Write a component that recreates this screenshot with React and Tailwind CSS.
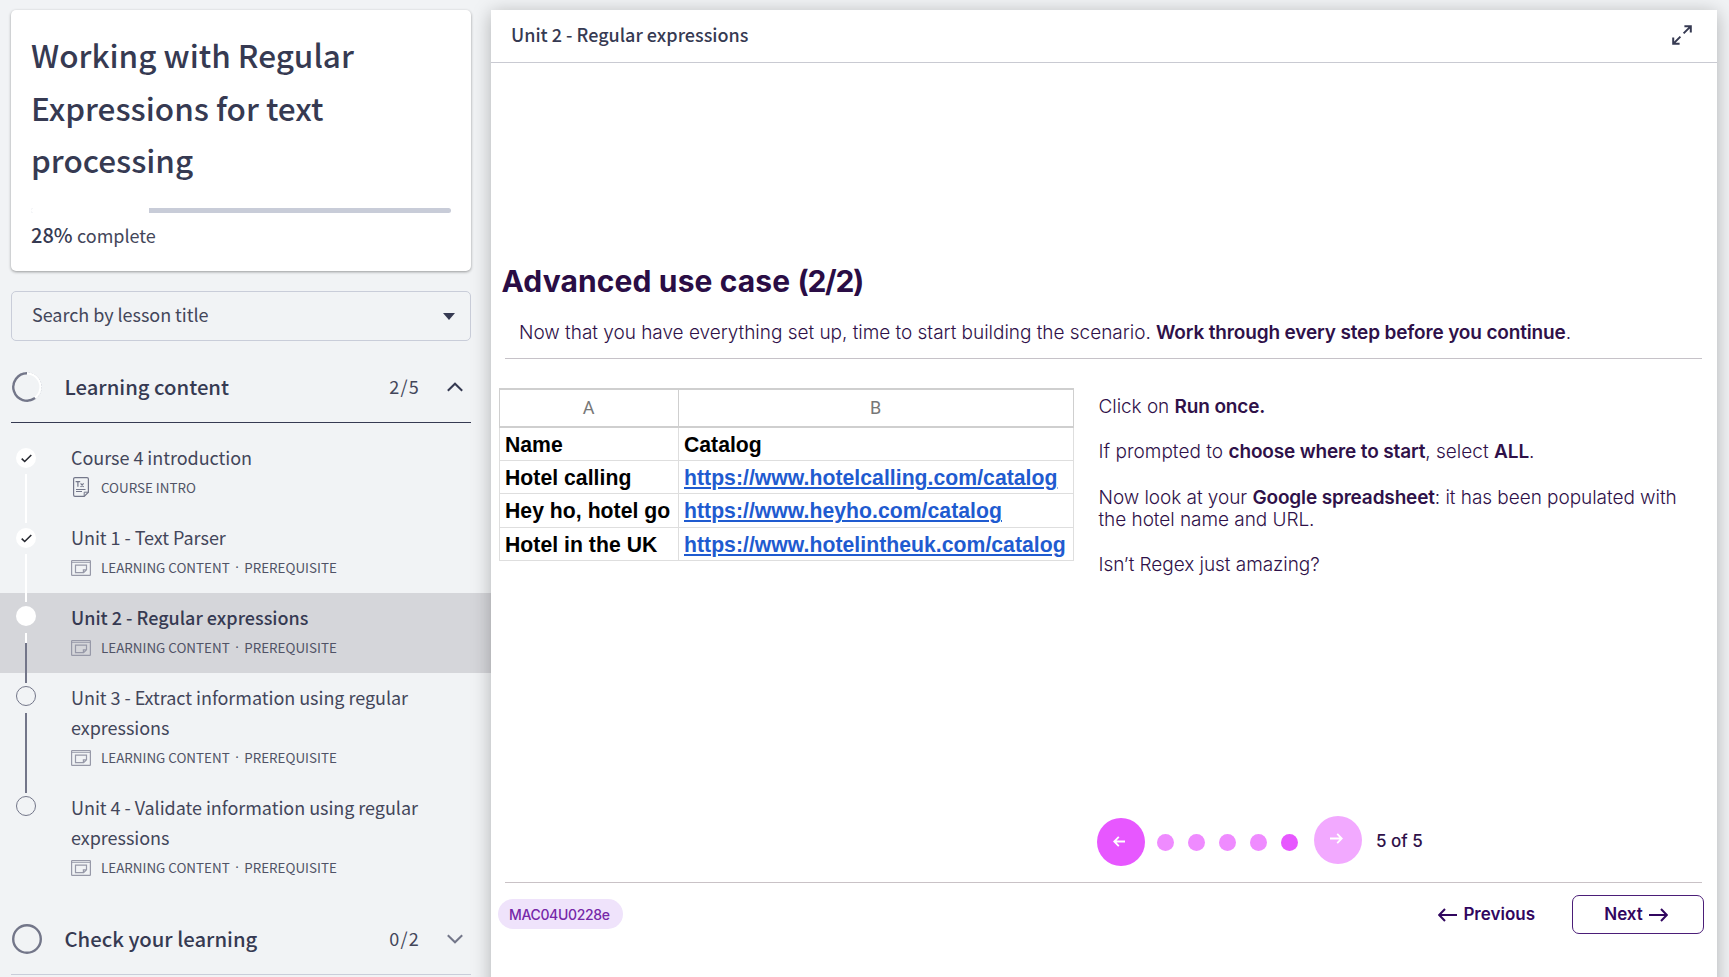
const TRACK_WHITE = "bg-white";
const TRACK_GRAY = "bg-[#737689]";

const lessons = [
  { title: "Course 4 introduction", kind: "COURSE INTRO", icon: "text", status: "done", line: "top-[41px] h-[49px]", tone: TRACK_WHITE },
  { title: "Unit 1 - Text Parser", kind: "LEARNING CONTENT", tag: "PREREQUISITE", icon: "window", status: "done", line: "top-[41px] h-[48px]", tone: TRACK_WHITE },
  { title: "Unit 2 - Regular expressions", kind: "LEARNING CONTENT", tag: "PREREQUISITE", icon: "window", status: "current", line: "top-[40px] h-[50px]", tone: TRACK_GRAY },
  { title: "Unit 3 - Extract information using regular expressions", kind: "LEARNING CONTENT", tag: "PREREQUISITE", icon: "window", status: "todo", line: "top-[40px] h-[80px]", tone: TRACK_GRAY },
  { title: "Unit 4 - Validate information using regular expressions", kind: "LEARNING CONTENT", tag: "PREREQUISITE", icon: "window", status: "todo" },
];

const hotels = [
  ["Hotel calling", "https://www.hotelcalling.com/catalog"],
  ["Hey ho, hotel go", "https://www.heyho.com/catalog"],
  ["Hotel in the UK", "https://www.hotelintheuk.com/catalog"],
];

function TextIcon() {
  return (
    <svg className="ml-[2px] h-5 w-4" viewBox="0 0 16 20" fill="none" stroke="#74778a" strokeWidth="1.2">
      <path d="M2 .6h12a1.4 1.4 0 0 1 1.4 1.4v13.2l-4.2 4.2H2A1.4 1.4 0 0 1 .6 18V2A1.4 1.4 0 0 1 2 .6Z" />
      <path d="M11.2 19.4v-4.2h4.2M3 12.5h9.5M3 14.5h6" strokeWidth="1" />
      <path d="M2.6 4.6h4.6M4.9 4.6v5.2M7.6 6.4l3 3.4M10.6 6.4 7.6 9.8" strokeWidth="1.2" />
    </svg>
  );
}

function WindowIcon() {
  return (
    <svg className="mt-[1px] h-4 w-5" viewBox="0 0 20 16" fill="none" stroke="#9799a8" strokeWidth="1.2">
      <rect x=".6" y=".6" width="18.8" height="14.8" rx=".6" />
      <path d="M.6 2.5h18.8" strokeWidth=".8" />
      <path d="M4.5 5.1h11v4.7l-2.9 2.9H4.5ZM12.4 12.7V9.8h3.1" />
    </svg>
  );
}

function Marker({ status }) {
  if (status === "done") {
    return (
      <span className="mt-[15px] flex h-5 w-5 items-center justify-center rounded-full bg-white">
        <svg className="h-[9px] w-[11px]" viewBox="0 0 11 9" fill="none" stroke="#25272f" strokeWidth="1.6">
          <path d="M.7 4.6 3.7 7.5 10.3 1" />
        </svg>
      </span>
    );
  }
  if (status === "current") return <span className="mt-[13px] h-5 w-5 rounded-full bg-white" />;
  return <span className="mt-[13px] h-5 w-5 rounded-full border border-[#737689]" />;
}

function Lesson({ item }) {
  const current = item.status === "current";
  return (
    <li className={current ? "relative flex bg-[#d5d6da] pl-4" : "relative flex pl-4"}>
      {item.line && (
        <span className={`absolute left-[25px] z-10 flex w-[2px] flex-col ${item.line} ${item.tone}`}>
          {current && <span className="h-[10px] bg-white" />}
        </span>
      )}
      <Marker status={item.status} />
      <div className="ml-[35px] w-[370px] pt-[9px] pb-[11px]">
        <div className={current ? "text-[18px] leading-[30px] font-medium" : "text-[18px] leading-[30px] tracking-[-0.04px] text-[#43465a]"}>{item.title}</div>
        <div className="flex h-[30px] items-center text-[13.4px] text-[#505366]">
          <span className="flex w-[30px]">{item.icon === "text" ? <TextIcon /> : <WindowIcon />}</span>
          <span>{item.kind}</span>
          {item.tag && (
            <>
              <span className="w-[14.6px] text-center font-['Noto_Sans']">·</span>
              <span>{item.tag}</span>
            </>
          )}
        </div>
      </div>
    </li>
  );
}

function SectionHeader({ title, count, open }) {
  return (
    <div className={`mr-5 ml-[11px] flex h-[72px] items-center border-b ${open ? "border-[#363a52]" : "border-[#c9cdd9]"}`}>
      <svg className="ml-[1px] h-[30px] w-[30px]" viewBox="0 0 30 30" fill="none">
        {open ? (
          <>
            <circle cx="15" cy="15" r="14.4" stroke="#c4c6d0" strokeWidth=".9" strokeDasharray="1.5 1.5" />
            <circle cx="15" cy="15" r="13.4" stroke="#fff" strokeWidth="2" />
            <path d="M15 1.3A13.7 13.7 0 1 0 23.05 26.08" stroke="#737689" strokeWidth="2.4" />
          </>
        ) : (
          <circle cx="15" cy="15" r="13.8" stroke="#737689" strokeWidth="2.4" />
        )}
      </svg>
      <h2 className="ml-[22.5px] flex-1 pb-[2px] text-[20.3px] leading-[30px] font-medium">{title}</h2>
      <span className="text-[18px] tracking-[1.2px] text-[#43465a]">{count}</span>
      <svg className="mr-2 ml-[27px] h-[10px] w-4" viewBox="0 0 16 10" fill="none" stroke={open ? "#363a52" : "#737689"} strokeWidth="2">
        <path d={open ? "M.8 8.7 8 1.7l7.2 7" : "M.8 1.3 8 8.3l7.2-7"} />
      </svg>
    </div>
  );
}

function Sidebar() {
  return (
    <aside className="w-[491px] shrink-0 pt-[10px] text-[#363a52]">
      <section className="mr-5 ml-[11px] h-[261px] rounded-[5px] bg-white px-5 pt-[18px] shadow-[0_1px_3px_rgba(0,0,0,0.38)]">
        <h1 className="w-[400px] text-[31.5px] leading-[52.7px] font-medium">Working with Regular Expressions for text processing</h1>
        <div className="mt-[22px] flex h-[5px] overflow-hidden rounded-full bg-[#c8ccd8]">
          <div className="w-[118px] bg-white" />
        </div>
        <p className="mt-[7px] flex items-baseline text-[18px] leading-[30px]">
          <span className="mr-[4.5px] text-[20px] font-medium">28%</span>
          <span className="tracking-[-0.05px] text-[#43465a]">complete</span>
        </p>
      </section>
      <div className="mt-5 mr-5 ml-[11px] flex h-[50px] items-center justify-between rounded-[5px] border border-[#c9cdd9] pr-[15px] pl-5 text-[18px] text-[#43465a]">
        <span className="pb-[3px] tracking-[-0.04px]">Search by lesson title</span>
        <svg className="h-[7px] w-3" viewBox="0 0 12 7" fill="#363a52">
          <path d="M0 0h12L6 7Z" />
        </svg>
      </div>
      <div className="pt-[10px]">
        <SectionHeader title="Learning content" count="2/5" open />
      </div>
      <ul className="py-[10px]">
        {lessons.map((item) => (
          <Lesson key={item.title} item={item} />
        ))}
      </ul>
      <SectionHeader title="Check your learning" count="0/2" />
    </aside>
  );
}

function B({ children }) {
  return <span className="font-semibold tracking-[-0.15px]">{children}</span>;
}

function SheetTable() {
  return (
    <table className="ml-[7.5px] w-[574px] shrink-0 table-fixed border-collapse font-['Liberation_Sans',sans-serif] text-[21.2px] text-black">
      <colgroup>
        <col className="w-[179px]" />
        <col className="w-[395px]" />
      </colgroup>
      <thead>
        <tr className="h-[38px] font-['Roboto',sans-serif] text-[18px] text-[#777]">
          <th className="border border-t-2 border-b-2 border-[#cfcfcf] p-0 pb-[2px] font-normal">A</th>
          <th className="border border-t-2 border-b-2 border-[#cfcfcf] p-0 pb-[2px] font-normal">B</th>
        </tr>
      </thead>
      <tbody className="font-bold">
        <tr className="h-[33.3px]">
          <td className="border border-[#dedede] p-0 pt-[2px] pl-[5.5px] leading-[30px]">Name</td>
          <td className="border border-[#dedede] p-0 pt-[2px] pl-[5.5px] leading-[30px]">Catalog</td>
        </tr>
        {hotels.map(([name, url]) => (
          <tr key={name} className="h-[33.3px]">
            <td className="border border-[#dedede] p-0 pt-[2px] pl-[5.5px] leading-[30px] tracking-[0.03px] whitespace-nowrap">{name}</td>
            <td className="border border-[#dedede] p-0 pt-[2px] pl-[5.5px] leading-[30px] tracking-[0.03px] whitespace-nowrap text-[#1f5bd0] underline decoration-2 underline-offset-2">{url}</td>
          </tr>
        ))}
      </tbody>
    </table>
  );
}

function Arrow({ left }) {
  return (
    <svg className="h-[14px] w-[19px]" viewBox="0 0 19 14" fill="none" stroke="currentColor" strokeWidth="2">
      <path d={left ? "M19 7H1.4M7 1 1.2 7 7 13" : "M0 7h17.6M12 1l5.8 6-5.8 6"} />
    </svg>
  );
}

function Pager() {
  return (
    <div className="ml-[605.5px] flex h-[51px] items-center">
      <span className="mt-[3px] flex h-12 w-12 items-center justify-center rounded-full bg-[#e757ff] text-white">
        <svg className="mr-[3px] mb-[1px] h-[11px] w-3" viewBox="0 0 12 11" fill="none" stroke="currentColor" strokeWidth="1.8">
          <path d="M12 5.5H1.2M5.8.8 1.2 5.5l4.6 4.7" />
        </svg>
      </span>
      <div className="mt-[4px] ml-[12.5px] flex gap-[14px]">
        <span className="h-[17px] w-[17px] rounded-full bg-[#ef8bff]" />
        <span className="h-[17px] w-[17px] rounded-full bg-[#ef8bff]" />
        <span className="h-[17px] w-[17px] rounded-full bg-[#ef8bff]" />
        <span className="h-[17px] w-[17px] rounded-full bg-[#ef8bff]" />
        <span className="h-[17px] w-[17px] rounded-full bg-[#e757ff]" />
      </div>
      <span className="mb-[2px] ml-4 flex h-12 w-12 items-center justify-center rounded-full bg-[#f2a9ff] text-white">
        <svg className="mr-[3px] mb-[2px] h-[11px] w-[13px]" viewBox="0 0 13 11" fill="none" stroke="currentColor" strokeWidth="1.8">
          <path d="M0 5.5h11.8M7.2.8l4.6 4.7-4.6 4.7" />
        </svg>
      </span>
      <span className="mt-[2px] ml-[14px] text-[17px] font-medium">5 of 5</span>
    </div>
  );
}

export default function App() {
  return (
    <div className="flex h-[977px] w-[1729px] overflow-hidden bg-[#f1f3f5] font-['Noto_Sans_CJK_SC',sans-serif]">
      <Sidebar />
      <main className="relative z-20 mt-[10px] h-[1000px] w-[1226px] shrink-0 bg-white shadow-[0_3px_18px_rgba(0,0,0,0.27)]">
        <header className="flex h-[53px] items-center justify-between border-b border-[#c9cad2] pr-[25px] pl-5 text-[#363a52]">
          <span className="pb-[3px] text-[18px] font-medium">Unit 2 - Regular expressions</span>
          <svg className="mb-[2px] h-5 w-5" viewBox="0 0 20 20" fill="none" stroke="#363a52" strokeWidth="2">
            <path d="M12.4 1.2h6.4v6.4M18.6 1.4 11.6 8.4M7.6 18.8H1.2v-6.4M1.4 18.6l7-7" />
          </svg>
        </header>
        <div className="pt-[197px] font-['Inter',sans-serif] text-[#2f1149]">
          <h2 className="ml-[10.5px] text-[30px] leading-[42px] font-bold tracking-[0.12px] text-[#2a0d45]">
            Advanced use case <span className="tracking-[-1.3px]">(2/2)</span>
          </h2>
          <p className="mt-[16px] ml-[28px] text-[19px] leading-[30px] font-light tracking-[-0.025px] whitespace-nowrap">
            Now that you have everything set up, time to start building the scenario. <B>Work through every step before you continue</B>.
          </p>
          <div className="mt-[10px] mr-[15px] ml-[14px] h-px bg-[#c6c2c8]" />
          <div className="flex h-[456px] pt-[29px]">
            <div>
              <SheetTable />
            </div>
            <div className="ml-[25px] flex w-[600px] flex-col gap-[23.4px] pt-[8px] text-[19px] leading-[22px] font-light tracking-[-0.05px]">
              <p>Click on <B>Run once.</B></p>
              <p className="tracking-[0.03px]">If prompted to <B>choose where to start</B>, select <B>ALL</B>.</p>
              <p>Now look at your <B>Google spreadsheet</B>: it has been populated with the hotel name and URL.</p>
              <p>Isn’t Regex just amazing?</p>
            </div>
          </div>
          <Pager />
          <div className="mt-[16px] mr-[15px] ml-[14px] h-px bg-[#c9c2c6]" />
          <footer className="mr-[13px] ml-[7px] flex h-[62px] items-center text-[17px] font-semibold text-[#31065f]">
            <span className="flex h-[30px] w-[125px] items-center rounded-full bg-[#efe3fb] pl-[11px] text-[14px] font-medium tracking-[-0.35px] text-[#7627a8]">MAC04U0228e</span>
            <span className="ml-auto flex items-center gap-[6px] pt-[1px]">
              <Arrow left />
              Previous
            </span>
            <span className="ml-[37px] flex h-[39px] w-[132px] items-center justify-center gap-[6px] rounded-[7px] border-[1.5px] border-[#4b1e78] pt-[1px] pr-1">
              Next
              <Arrow />
            </span>
          </footer>
        </div>
      </main>
    </div>
  );
}
